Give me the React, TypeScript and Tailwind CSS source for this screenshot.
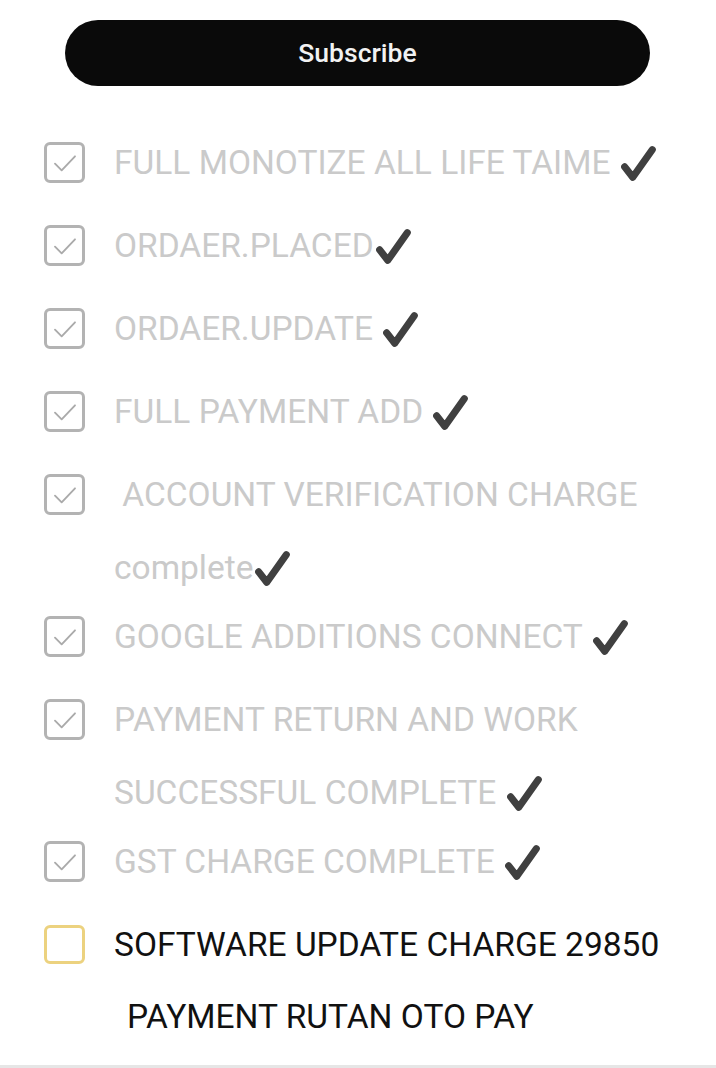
import React from 'react';

type Item = {
  lines: string[];
  done: boolean;
  tick?: boolean;
};

const items: Item[] = [
  { lines: ['FULL MONOTIZE ALL LIFE TAIME '], done: true, tick: true },
  { lines: ['ORDAER.PLACED'], done: true, tick: true },
  { lines: ['ORDAER.UPDATE '], done: true, tick: true },
  { lines: ['FULL PAYMENT ADD '], done: true, tick: true },
  { lines: ['\u00a0ACCOUNT VERIFICATION CHARGE', 'complete'], done: true, tick: true },
  { lines: ['GOOGLE ADDITIONS CONNECT '], done: true, tick: true },
  { lines: ['PAYMENT RETURN AND WORK', 'SUCCESSFUL COMPLETE '], done: true, tick: true },
  { lines: ['GST CHARGE COMPLETE '], done: true, tick: true },
];

const Tick = () => (
  <svg
    viewBox="0 0 40 40"
    className="inline-block w-[38px] h-[38px] align-[-9px]"
    aria-hidden="true"
  >
    <path
      d="M6 23 L14.5 34 L35 5"
      fill="none"
      stroke="#404040"
      strokeWidth="7.5"
      strokeLinecap="round"
      strokeLinejoin="round"
    />
  </svg>
);

const Box = ({ done }: { done: boolean }) =>
  done ? (
    <div className="w-[41px] h-[41px] shrink-0 rounded-[6px] border-[3px] border-[#b3b3b3] flex items-center justify-center">
      <svg viewBox="0 0 24 24" className="w-[32px] h-[32px]" fill="none">
        <path d="M4.5 12.5 L9.5 17.5 L19.5 7" stroke="#aaaaaa" strokeWidth="1.4" strokeLinecap="round" strokeLinejoin="round" />
      </svg>
    </div>
  ) : (
    <div className="w-[41px] h-[39px] shrink-0 rounded-[6px] border-[3px] border-[#ecd27f]" />
  );

export default function App() {
  return (
    <div className="w-[716px] h-[1068px] bg-white overflow-hidden flex flex-col font-['Roboto',sans-serif]">
      <div className="pt-[20px] pl-[65px] pr-[66px]">
        <button className="w-full h-[66px] rounded-full bg-[#0a0a0a] text-[#f2f2f2] text-[26.5px] font-medium">
          Subscribe
        </button>
      </div>

      <div className="flex flex-col pt-[40px] pl-[44px]">
        {items.map((it, i) => (
          <div
            key={i}
            className={`flex gap-[29px] ${it.lines.length > 1 ? 'h-[142px]' : 'h-[83px]'}`}
          >
            <div className="h-[73px] flex items-center">
              <Box done={it.done} />
            </div>
            <div className="text-[33.5px] leading-[73px] text-[#cacaca] whitespace-pre">
              {it.lines.map((l, j) => (
                <div key={j}>
                  {l}
                  {j === it.lines.length - 1 && it.tick && <Tick />}
                </div>
              ))}
            </div>
          </div>
        ))}

        <div className="flex gap-[29px]">
          <div className="h-[73px] flex items-center">
            <Box done={false} />
          </div>
          <div className="text-[33.5px] leading-[73px] text-[#111111]">
            SOFTWARE UPDATE CHARGE 29850
          </div>
        </div>
        <div className="pl-[83px] text-[33.5px] leading-[72px] text-[#111111]">
          PAYMENT RUTAN OTO PAY
        </div>
      </div>

      <div className="mt-auto h-[3px] bg-[#e6e6e6]" />
    </div>
  );
}
